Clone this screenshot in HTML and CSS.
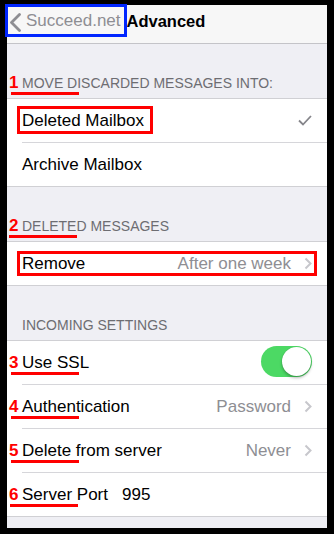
FILE: index.html
```html
<!DOCTYPE html>
<html>
<head>
<meta charset="utf-8">
<title>Advanced</title>
<link rel="stylesheet" href="styles.css">
</head>
<body>
<div class="screen">
  <header class="nav">
    <svg class="back-chevron" width="12" height="19" viewBox="0 0 12 19"><polyline points="10.5,1.5 2.5,9.5 10.5,17.5" fill="none" stroke="#8e8e93" stroke-width="2.8" stroke-linecap="round" stroke-linejoin="round"/></svg>
    <span class="back-label">Succeed.net</span>
    <span class="nav-title">Advanced</span>
    <span class="hl-blue"></span>
  </header>

  <section class="section">
    <div class="section-head"><span class="head-label">MOVE DISCARDED MESSAGES INTO:<span class="annot-num head-num">1</span><span class="annot-line head-line"></span></span></div>
    <div class="group">
      <div class="row">
        <div class="row-inner">
          <span class="label">Deleted Mailbox</span>
          <svg class="check" width="14" height="11" viewBox="0 0 14 11"><polyline points="1,5.5 5,9.5 13,1" fill="none" stroke="#85858a" stroke-width="1.8"/></svg>
        </div>
        <span class="hl-red box-mailbox"></span>
      </div>
      <div class="row">
        <div class="row-inner">
          <span class="label">Archive Mailbox</span>
        </div>
      </div>
    </div>
  </section>

  <section class="section">
    <div class="section-head"><span class="head-label">DELETED MESSAGES<span class="annot-num head-num">2</span><span class="annot-line head-line line-deleted"></span></span></div>
    <div class="group">
      <div class="row">
        <div class="row-inner">
          <span class="label">Remove</span>
          <span class="value">After one week</span>
          <svg class="chevron" width="8" height="13" viewBox="0 0 8 13"><polyline points="1.5,1.5 6.5,6.5 1.5,11.5" fill="none" stroke="#c7c7cc" stroke-width="2"/></svg>
        </div>
        <span class="hl-red box-remove"></span>
      </div>
    </div>
  </section>

  <section class="section">
    <div class="section-head"><span class="head-label">INCOMING SETTINGS</span></div>
    <div class="group">
      <div class="row">
        <div class="row-inner">
          <span class="label">Use SSL<span class="annot-num">3</span><span class="annot-line"></span></span>
          <span class="switch"><span class="knob"></span></span>
        </div>
      </div>
      <div class="row">
        <div class="row-inner">
          <span class="label">Authentication<span class="annot-num">4</span><span class="annot-line"></span></span>
          <span class="value">Password</span>
          <svg class="chevron" width="8" height="13" viewBox="0 0 8 13"><polyline points="1.5,1.5 6.5,6.5 1.5,11.5" fill="none" stroke="#c7c7cc" stroke-width="2"/></svg>
        </div>
      </div>
      <div class="row">
        <div class="row-inner">
          <span class="label">Delete from server<span class="annot-num">5</span><span class="annot-line"></span></span>
          <span class="value">Never</span>
          <svg class="chevron" width="8" height="13" viewBox="0 0 8 13"><polyline points="1.5,1.5 6.5,6.5 1.5,11.5" fill="none" stroke="#c7c7cc" stroke-width="2"/></svg>
        </div>
      </div>
      <div class="row">
        <div class="row-inner">
          <span class="label port-label">Server Port<span class="annot-num">6</span><span class="annot-line line-port"></span></span>
          <span class="port-value">995</span>
        </div>
      </div>
    </div>
  </section>
</div>
</body>
</html>
```

FILE: styles.css
```css
* { box-sizing: border-box; }

html, body {
  margin: 0;
  padding: 0;
  background: #000;
  width: 334px;
  height: 534px;
  overflow: hidden;
}

body {
  padding: 5px 7px 0 7px;
  font-family: "Liberation Sans", Arial, sans-serif;
  -webkit-font-smoothing: antialiased;
}

.screen {
  width: 320px;
  height: 523px;
  background: #efeff4;
  display: flex;
  flex-direction: column;
}

/* Navigation bar */
.nav {
  position: relative;
  height: 39px;
  background: #f7f7f7;
  border-bottom: 1px solid #c4c4c8;
  display: flex;
  align-items: center;
  padding: 0 0 4px 2px;
  flex-shrink: 0;
}

.back-chevron {
  display: block;
  flex-shrink: 0;
}

.back-label {
  margin-left: 5px;
  font-size: 17px;
  line-height: 20px;
  color: #8e8e93;
  margin-bottom: 2px;
}

.nav-title {
  margin-left: 6px;
  font-size: 16.5px;
  line-height: 20px;
  font-weight: bold;
  color: #000;
  margin-bottom: 2px;
}

.hl-blue {
  position: absolute;
  left: -2px;
  top: -1px;
  width: 122px;
  height: 33px;
  border: 3px solid #0026ff;
}

/* Sections */
.section-head {
  height: 54px;
  display: flex;
  flex-direction: column;
  justify-content: flex-end;
  padding: 0 15px 6px 15px;
}

.head-label {
  position: relative;
  align-self: flex-start;
  font-size: 14px;
  line-height: 17px;
  color: #6d6d72;
}

.group {
  background: #fff;
  border-top: 1px solid #d0d0d4;
  border-bottom: 1px solid #d0d0d4;
}

.row {
  position: relative;
  padding-left: 15px;
  background: #fff;
}

.row-inner {
  height: 44px;
  display: flex;
  align-items: center;
  padding-right: 15px;
  border-bottom: 1px solid #d6d6da;
}

.row:last-child .row-inner {
  height: 43px;
  border-bottom: none;
}

.label {
  position: relative;
  font-size: 17px;
  line-height: 20px;
  color: #000;
  flex: 1;
}

.port-label {
  flex: 0 0 100px;
}

.port-value {
  flex: 1;
  font-size: 17px;
  line-height: 20px;
  color: #000;
}

.value {
  font-size: 17px;
  line-height: 20px;
  color: #8e8e93;
  margin-right: 13px;
}

.chevron,
.check {
  display: block;
  flex-shrink: 0;
}

.check {
  margin-right: 0;
}

/* Toggle switch */
.switch {
  position: relative;
  width: 51px;
  height: 31px;
  border-radius: 16px;
  background: #4cd964;
  flex-shrink: 0;
  margin-bottom: 2px;
}

.knob {
  position: absolute;
  right: 1px;
  top: 1px;
  width: 29px;
  height: 29px;
  border-radius: 50%;
  background: #fff;
  box-shadow: 0 2px 3px rgba(0, 0, 0, 0.28), 0 0 1px rgba(0, 0, 0, 0.2);
}

/* Annotations (overlays) */
.annot-num {
  position: absolute;
  left: -13px;
  top: 0;
  font-size: 17px;
  line-height: 20px;
  font-weight: bold;
  color: #ff0000;
}

.head-num {
  line-height: 17px;
  top: -1px;
}

.annot-line {
  position: absolute;
  left: -11px;
  top: 19px;
  width: 68px;
  height: 3px;
  background: #ff0000;
}

.head-line {
  top: 17px;
}

.line-deleted {
  left: -13px;
}

.line-port {
  left: -12px;
}

.hl-red {
  position: absolute;
  border: 3px solid #ff0000;
}

.box-mailbox {
  left: 10px;
  top: 7px;
  width: 136px;
  height: 28px;
}

.box-remove {
  left: 10px;
  top: 9px;
  width: 300px;
  height: 25px;
}
```
